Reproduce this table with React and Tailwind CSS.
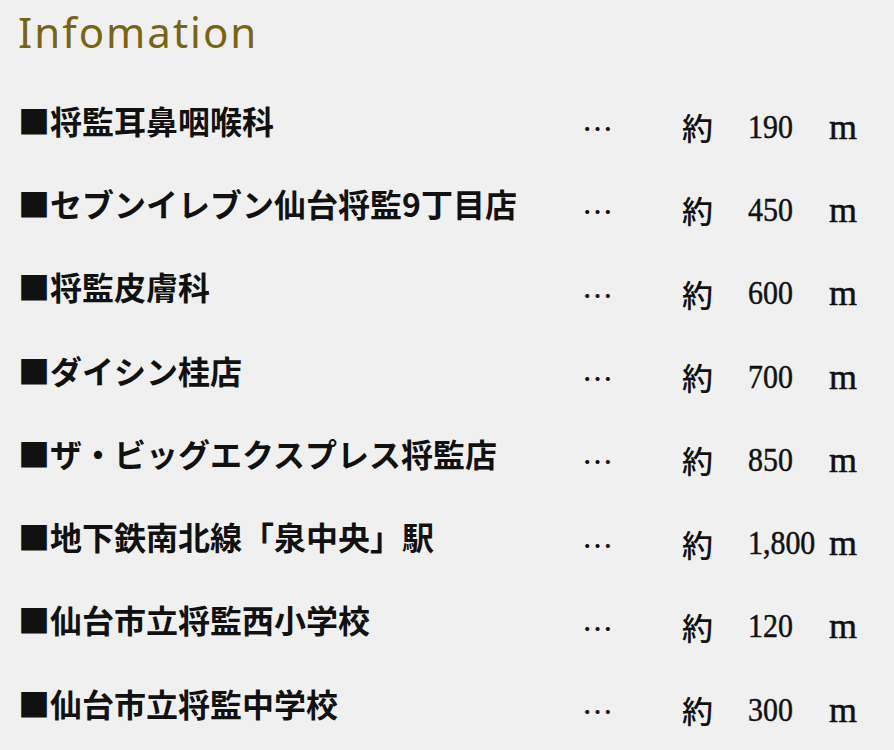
import React from "react";

const places = [
  { name: "■将監耳鼻咽喉科", dist: "190" },
  { name: "■セブンイレブン仙台将監9丁目店", dist: "450" },
  { name: "■将監皮膚科", dist: "600" },
  { name: "■ダイシン桂店", dist: "700" },
  { name: "■ザ・ビッグエクスプレス将監店", dist: "850" },
  { name: "■地下鉄南北線「泉中央」駅", dist: "1,800" },
  { name: "■仙台市立将監西小学校", dist: "120" },
  { name: "■仙台市立将監中学校", dist: "300" },
];

const cjk = { fontFamily: '"Noto Sans CJK JP", sans-serif' };
const serif = { fontFamily: '"Liberation Serif", serif' };

export default function App() {
  return (
    <div className="w-[894px] h-[750px] overflow-hidden bg-[#f0f0f0] text-[#111]">
      {/* Title */}
      <div className="h-[78px] pl-[18px]">
        <h1
          className="text-[42px] leading-normal tracking-[2px] font-normal text-[#7a6414]"
          style={{ fontFamily: '"Noto Sans", sans-serif' }}
        >
          Infomation
        </h1>
      </div>

      {/* List */}
      <ul className="pl-[18px]">
        {places.map((p) => (
          <li key={p.name} className="flex items-center h-[83.3px]">
            <span
              className="w-[564px] shrink-0 text-[32px] leading-none font-bold whitespace-nowrap"
              style={cjk}
            >
              {p.name}
            </span>
            <div className="flex items-center mt-[14px]">
              <span className="w-[100px] text-[31px] leading-none" style={cjk}>
                …
              </span>
              <span className="w-[66px] text-[31px] leading-none font-medium" style={cjk}>
                約
              </span>
              <span className="w-[81px] text-[34px] leading-none" style={serif}>
                <span className="inline-block scale-x-[0.88] origin-left [-webkit-text-stroke:0.5px_#111]">
                  {p.dist}
                </span>
              </span>
              <span className="text-[36px] leading-none [-webkit-text-stroke:0.5px_#111]" style={serif}>
                m
              </span>
            </div>
          </li>
        ))}
      </ul>
    </div>
  );
}
